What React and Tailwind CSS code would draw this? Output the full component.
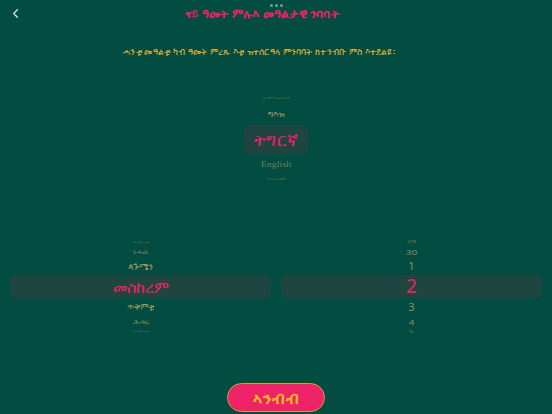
import { ChevronLeft } from "lucide-react";

const ethi = { fontFamily: '"Noto Sans", "DejaVu Sans", sans-serif' };

function Wheel({ rows }) {
  return (
    <div className="flex flex-col items-stretch">
      {rows.map((r, i) =>
        r.sel ? (
          <div
            key={i}
            className={`flex items-center justify-center rounded-md bg-[#1f4540] text-[#ee1f63] ${r.box}`}
          >
            <span className={r.cls}>{r.t}</span>
          </div>
        ) : (
          <div key={i} className={`flex items-center justify-center ${r.box}`}>
            <span className={r.cls}>{r.t}</span>
          </div>
        )
      )}
    </div>
  );
}

export default function App() {
  const top = [
    { t: "ኣምሓርኛ", box: "h-[10px]", cls: "text-[8px] text-[#6f7c50] scale-y-[0.35] inline-block" },
    { t: "ግእዝ", box: "h-[22px]", cls: "text-[9px] text-[#9a9560] scale-y-[0.85] inline-block" },
    { t: "ትግርኛ", sel: true, box: "h-[29px] w-[64px] mx-auto", cls: "text-[17px] tracking-[1px]" },
    { t: "English", box: "h-[19px]", cls: "text-[10px] text-[#6f7f55] font-['Liberation_Serif'] inline-block scale-y-[0.9]" },
    { t: "ዓረብኛ", box: "h-[11px]", cls: "text-[8px] text-[#6f7c50] scale-y-[0.35] inline-block" },
  ];
  const months = [
    { t: "ሓምለ", box: "h-[8px]", cls: "text-[7px] text-[#7a8050] scale-y-[0.3] inline-block" },
    { t: "ነሓሰ", box: "h-[12px]", cls: "text-[8px] text-[#9a9560] scale-y-[0.75] inline-block" },
    { t: "ጳጉሜን", box: "h-[17px]", cls: "text-[9px] text-[#9a9560] scale-y-[0.95] inline-block" },
    { t: "መስከረም", sel: true, box: "h-[23px]", cls: "text-[16px]" },
    { t: "ጥቅምቲ", box: "h-[18px]", cls: "text-[9px] text-[#9a9560] scale-y-[0.95] inline-block" },
    { t: "ሕዳር", box: "h-[12px]", cls: "text-[8px] text-[#9a9560] scale-y-[0.75] inline-block" },
    { t: "ታሕሳስ", box: "h-[7px]", cls: "text-[7px] text-[#7a8050] scale-y-[0.3] inline-block" },
  ];
  const days = [
    { t: "29", box: "h-[8px]", cls: "text-[8px] text-[#7a8050] scale-y-[0.35] inline-block" },
    { t: "30", box: "h-[12px]", cls: "text-[10px] text-[#8f8d5a] scale-y-[0.75] inline-block" },
    { t: "1", box: "h-[17px]", cls: "text-[11px] text-[#8f8d5a] inline-block" },
    { t: "2", sel: true, box: "h-[23px]", cls: "text-[19px]" },
    { t: "3", box: "h-[18px]", cls: "text-[11px] text-[#8f8d5a] inline-block" },
    { t: "4", box: "h-[12px]", cls: "text-[10px] text-[#8f8d5a] scale-y-[0.75] inline-block" },
    { t: "5", box: "h-[7px]", cls: "text-[8px] text-[#7a8050] scale-y-[0.35] inline-block" },
  ];

  return (
    <div className="w-[552px] h-[414px] bg-[#024c41] flex flex-col overflow-hidden" style={ethi}>
      <div className="flex justify-center gap-[2px] pt-[4px] h-[6px]">
        <span className="w-[3px] h-[3px] rounded-full bg-[#5fa79a]" />
        <span className="w-[3px] h-[3px] rounded-full bg-[#5fa79a]" />
        <span className="w-[3px] h-[3px] rounded-full bg-[#5fa79a]" />
      </div>
      <div className="flex items-center h-[15px] px-[8px]">
        <ChevronLeft className="w-[15px] h-[15px] text-[#d7e3df]" strokeWidth={2} />
        <div className="flex-1 text-center text-[#ee1f63] text-[12px] tracking-[0.2px] font-bold pr-[43px]">
          ናይ ዓመት ምሉእ መዓልታዊ ንባባት
        </div>
      </div>
      <div className="mt-[25px] pr-[34px] text-center text-[#e0b23a] text-[9px] tracking-[0.2px] leading-[11px]">
        ሓንቲ መዓልቲ ካብ ዓመት ምረጹ እቲ ዝተሰርዓላ ምንባባት ክተንብቡ ምስ እተደልዩ፡
      </div>
      <div className="mt-[36px]">
        <Wheel rows={top} />
      </div>
      <div className="mt-[54px] grid grid-cols-2 gap-[10px] px-[10px]">
        <Wheel rows={months} />
        <Wheel rows={days} />
      </div>
      <div className="mt-auto mb-[2px] flex justify-center">
        <button className="w-[98px] h-[29px] rounded-full bg-[#ee2266] border border-[#c9a23a] text-[#f4b62a] text-[16px] tracking-[1px] font-bold flex items-center justify-center">
          ኣንብብ
        </button>
      </div>
    </div>
  );
}
